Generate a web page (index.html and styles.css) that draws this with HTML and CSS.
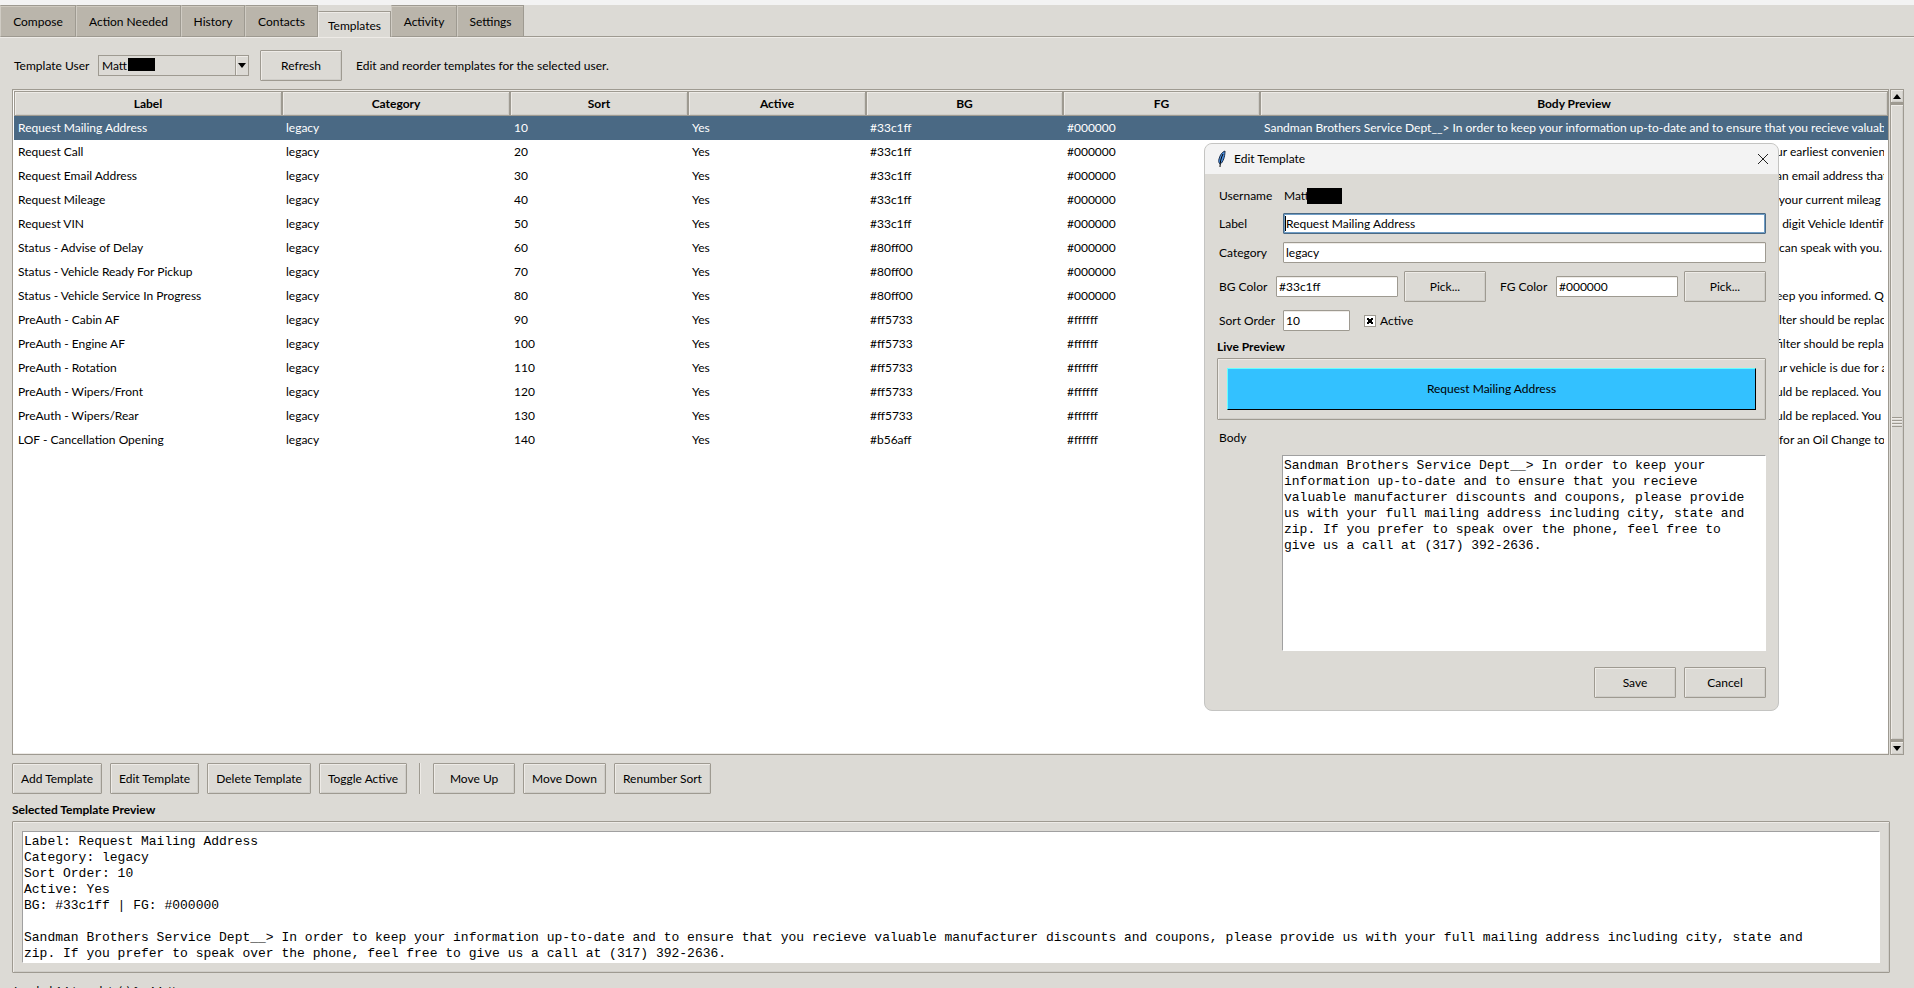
FILE: index.html
```html
<!DOCTYPE html>
<html lang="en">
<head>
<meta charset="utf-8">
<title>Templates</title>
<link rel="stylesheet" href="styles.css">
</head>
<body>
<div class="app">
  <div class="titlebar"></div>
  <nav class="tabs">
    <button class="tab">Compose</button>
    <button class="tab">Action Needed</button>
    <button class="tab">History</button>
    <button class="tab">Contacts</button>
    <button class="tab tab-active">Templates</button>
    <button class="tab">Activity</button>
    <button class="tab">Settings</button>
  </nav>

  <main class="page">
    <div class="toolbar">
      <label for="user">Template User</label>
      <div class="combo">
        <select id="user"><option>Matt</option></select>
        <span class="mask"></span>
        <span class="combo-arrow"><svg width="8" height="5" viewBox="0 0 8 5"><path d="M0 0h8L4 5z"/></svg></span>
      </div>
      <button class="btn btn-refresh">Refresh</button>
      <span>Edit and reorder templates for the selected user.</span>
    </div>

    <div class="list">
      <div class="list-frame">
        <table class="grid">
          <colgroup><col class="c-label"><col class="c-cat"><col class="c-sort"><col class="c-active"><col class="c-bg"><col class="c-fg"><col></colgroup>
          <thead>
            <tr><th>Label</th><th>Category</th><th>Sort</th><th>Active</th><th>BG</th><th>FG</th><th>Body Preview</th></tr>
          </thead>
          <tbody>
            <tr class="selected"><td>Request Mailing Address</td><td>legacy</td><td>10</td><td>Yes</td><td>#33c1ff</td><td>#000000</td><td><div class="body">Sandman Brothers Service Dept__&gt; In order to keep your information up-to-date and to ensure that you recieve valuab</div></td></tr>
            <tr><td>Request Call</td><td>legacy</td><td>20</td><td>Yes</td><td>#33c1ff</td><td>#000000</td><td><div class="body"><span class="lead"></span><span>ur earliest convenien</span></div></td></tr>
            <tr><td>Request Email Address</td><td>legacy</td><td>30</td><td>Yes</td><td>#33c1ff</td><td>#000000</td><td><div class="body"><span class="lead"></span><span>an email address that</span></div></td></tr>
            <tr><td>Request Mileage</td><td>legacy</td><td>40</td><td>Yes</td><td>#33c1ff</td><td>#000000</td><td><div class="body"><span class="lead"></span><span> your current mileag</span></div></td></tr>
            <tr><td>Request VIN</td><td>legacy</td><td>50</td><td>Yes</td><td>#33c1ff</td><td>#000000</td><td><div class="body"><span class="lead"></span><span>  digit Vehicle Identif</span></div></td></tr>
            <tr><td>Status - Advise of Delay</td><td>legacy</td><td>60</td><td>Yes</td><td>#80ff00</td><td>#000000</td><td><div class="body"><span class="lead"></span><span> can speak with you.</span></div></td></tr>
            <tr><td>Status - Vehicle Ready For Pickup</td><td>legacy</td><td>70</td><td>Yes</td><td>#80ff00</td><td>#000000</td><td></td></tr>
            <tr><td>Status - Vehicle Service In Progress</td><td>legacy</td><td>80</td><td>Yes</td><td>#80ff00</td><td>#000000</td><td><div class="body"><span class="lead"></span><span>eep you informed. Q</span></div></td></tr>
            <tr><td>PreAuth - Cabin AF</td><td>legacy</td><td>90</td><td>Yes</td><td>#ff5733</td><td>#ffffff</td><td><div class="body"><span class="lead"></span><span>ilter should be replac</span></div></td></tr>
            <tr><td>PreAuth - Engine AF</td><td>legacy</td><td>100</td><td>Yes</td><td>#ff5733</td><td>#ffffff</td><td><div class="body"><span class="lead"></span><span>filter should be repla</span></div></td></tr>
            <tr><td>PreAuth - Rotation</td><td>legacy</td><td>110</td><td>Yes</td><td>#ff5733</td><td>#ffffff</td><td><div class="body"><span class="lead"></span><span>ur vehicle is due for a</span></div></td></tr>
            <tr><td>PreAuth - Wipers/Front</td><td>legacy</td><td>120</td><td>Yes</td><td>#ff5733</td><td>#ffffff</td><td><div class="body"><span class="lead"></span><span>uld be replaced. You</span></div></td></tr>
            <tr><td>PreAuth - Wipers/Rear</td><td>legacy</td><td>130</td><td>Yes</td><td>#ff5733</td><td>#ffffff</td><td><div class="body"><span class="lead"></span><span>uld be replaced. You</span></div></td></tr>
            <tr><td>LOF - Cancellation Opening</td><td>legacy</td><td>140</td><td>Yes</td><td>#b56aff</td><td>#ffffff</td><td><div class="body"><span class="lead"></span><span> for an Oil Change to</span></div></td></tr>
          </tbody>
        </table>
      </div>
      <div class="scrollbar">
        <button class="scroll-btn" aria-label="Scroll up"><svg width="8" height="5" viewBox="0 0 8 5"><path d="M0 5h8L4 0z"/></svg></button>
        <div class="thumb"><span class="grip"></span></div>
        <button class="scroll-btn" aria-label="Scroll down"><svg width="8" height="5" viewBox="0 0 8 5"><path d="M0 0h8L4 5z"/></svg></button>
      </div>
    </div>

    <div class="actions">
      <button class="btn">Add Template</button>
      <button class="btn">Edit Template</button>
      <button class="btn">Delete Template</button>
      <button class="btn">Toggle Active</button>
      <span class="sep"></span>
      <button class="btn">Move Up</button>
      <button class="btn">Move Down</button>
      <button class="btn">Renumber Sort</button>
    </div>

    <h2 class="heading">Selected Template Preview</h2>
    <div class="frame preview">
      <pre class="mono preview-text">Label: Request Mailing Address
Category: legacy
Sort Order: 10
Active: Yes
BG: #33c1ff | FG: #000000

Sandman Brothers Service Dept__&gt; In order to keep your information up-to-date and to ensure that you recieve valuable manufacturer discounts and coupons, please provide us with your full mailing address including city, state and
zip. If you prefer to speak over the phone, feel free to give us a call at (317) 392-2636.</pre>
    </div>
  </main>
  <footer class="status">Loaded 14 template(s) for Matt.</footer>

  <section class="dialog" role="dialog" aria-label="Edit Template">
    <header class="dialog-title">
      <svg class="feather" width="12" height="18" viewBox="0 0 12 18"><path d="M9 1C6 2 4 5 3 9c-.5 2-.5 3 .5 4.500l1 .5C7 12 9 7 9 1z" fill="#4a8fe0" stroke="#1c2f4c"/><path d="M7 4C5 8 4 12 4 17" fill="none" stroke="#000"/></svg>
      <span class="dialog-name">Edit Template</span>
      <button class="close" aria-label="Close"><svg width="12" height="12" viewBox="0 0 12 12"><path d="M1 1l10 10M11 1L1 11" stroke="#222" fill="none"/></svg></button>
    </header>
    <form class="form">
      <div class="field field-user"><span class="name">Username</span><span class="user">Matt<span class="mask"></span></span></div>
      <div class="field"><label class="name" for="f-label">Label</label><input class="entry entry-focus" id="f-label" value="Request Mailing Address"><span class="caret"></span></div>
      <div class="field"><label class="name" for="f-cat">Category</label><input class="entry" id="f-cat" value="legacy"></div>
      <div class="colors">
        <label for="f-bg">BG Color</label><input class="entry" id="f-bg" value="#33c1ff"><button type="button" class="btn">Pick...</button>
        <label class="fg-label" for="f-fg">FG Color</label><input class="entry" id="f-fg" value="#000000"><button type="button" class="btn">Pick...</button>
      </div>
      <div class="field field-sort"><label class="name" for="f-sort">Sort Order</label><input class="entry entry-short" id="f-sort" value="10"><label class="check"><input type="checkbox" checked><span>Active</span></label></div>
      <h2 class="heading">Live Preview</h2>
      <div class="frame live"><button type="button" class="live-btn">Request Mailing Address</button></div>
      <label class="body-label" for="f-body">Body</label>
      <textarea class="mono body-text" id="f-body" spellcheck="false">Sandman Brothers Service Dept__&gt; In order to keep your
information up-to-date and to ensure that you recieve
valuable manufacturer discounts and coupons, please provide
us with your full mailing address including city, state and
zip. If you prefer to speak over the phone, feel free to
give us a call at (317) 392-2636.</textarea>
      <div class="dialog-actions"><button type="button" class="btn">Save</button><button type="button" class="btn">Cancel</button></div>
    </form>
  </section>
</div>
</body>
</html>
```
FILE: styles.css
```css
:root {
  --bg: #dcdad5;
  --dark: #9e9a91;
  --light: #eeebe7;
  --shade: #cfcdc8;
}
* { box-sizing: border-box; }
body {
  margin: 0;
  background: var(--bg);
  color: #000;
  font: 12px/16px Lato, "Open Sans", sans-serif;
}
button, input, select, textarea { font: inherit; color: inherit; border-radius: 0; margin: 0; }
.app { position: relative; height: 100vh; overflow: hidden; display: flex; flex-direction: column; }
.titlebar { flex: none; height: 5px; background: #f3f3f3; }

.tabs {
  flex: none;
  display: grid;
  grid-template-columns: 76px 105px 64px 73px 73px 66px 67px;
  align-items: end;
  height: 33px;
  border-bottom: 1px solid var(--light);
  box-shadow: inset 0 -1px var(--dark);
}
.tab {
  height: 32px;
  padding: 2px 0 0;
  border: 1px solid var(--dark);
  border-left-color: #d0ccc4;
  background: #bab5ab;
  box-shadow: inset 0 1px #cfcac0;
}
.tab-active {
  height: 26px;
  padding: 2px 0 0;
  border-left-color: var(--light);
  border-bottom: 0;
  background: var(--bg);
  box-shadow: inset 0 1px var(--light);
}

.page { flex: 1; min-height: 0; display: flex; flex-direction: column; padding: 12px 9px 0 12px; }
.toolbar { display: flex; align-items: center; padding-left: 2px; height: 31px; }
.toolbar > label { width: 84px; }
.btn {
  min-width: 82px;
  height: 31px;
  padding: 0 8px;
  border: 1px solid var(--dark);
  border-radius: 1px;
  background: var(--bg);
  box-shadow: inset 1px 1px var(--light), inset -1px -1px var(--shade);
  white-space: nowrap;
}
.btn-refresh { margin: 0 14px 0 11px; }
.combo { position: relative; width: 151px; height: 21px; }
.combo select {
  appearance: none;
  width: 100%;
  height: 100%;
  padding: 0 3px;
  border: 1px solid var(--dark);
  background: var(--bg);
}
.mask { position: absolute; left: 30px; top: 3px; width: 27px; height: 13px; background: #000; }
.combo-arrow {
  position: absolute;
  right: 1px;
  top: 1px;
  width: 13px;
  height: 19px;
  display: grid;
  place-items: center;
  border-left: 1px solid var(--dark);
  box-shadow: inset 1px 1px var(--light);
  pointer-events: none;
}

.list { flex: 1; min-height: 0; display: flex; gap: 1px; margin-top: 8px; padding-right: 1px; }
.list-frame { flex: 1; min-width: 0; padding: 1px 0 0 1px; border: 1px solid var(--dark); background: #fff; box-shadow: inset 0 -1px var(--light), inset 0 1px var(--light); }
.grid { width: 100%; table-layout: fixed; border-collapse: separate; border-spacing: 0; }
.c-label { width: 268px; }
.c-cat { width: 228px; }
.c-sort, .c-active { width: 178px; }
.c-bg, .c-fg { width: 197px; }
.grid th {
  height: 25px;
  padding: 0;
  border: 1px solid var(--dark);
  background: var(--bg);
  box-shadow: inset 1px 1px var(--light), inset -1px -1px var(--shade);
  font-weight: 700;
}
.grid td { height: 24px; padding: 0 4px; white-space: nowrap; overflow: hidden; }
.selected td { background: #4a6984; color: #fff; }
.body { display: flex; overflow: hidden; white-space: pre; }
.lead { flex: 0 0 512px; }

.scrollbar { flex: none; width: 14px; display: flex; flex-direction: column; gap: 1px; background: var(--dark); }
.scroll-btn, .thumb {
  display: grid;
  place-items: center;
  border: 1px solid var(--dark);
  background: var(--bg);
  box-shadow: inset 1px 1px var(--light), inset -1px -1px var(--shade);
}
.scroll-btn { height: 14px; padding: 0; }
.thumb { flex: 1; }
.grip { width: 10px; height: 10px; background: repeating-linear-gradient(var(--dark) 0 1px, var(--light) 1px 2px, var(--bg) 2px 3px); }

.actions { display: flex; gap: 8px; margin-top: 8px; }
.sep { width: 2px; margin: 0 4px; border-left: 1px solid var(--dark); border-right: 1px solid var(--light); }
.heading { margin: 0; font-size: 12px; line-height: 16px; font-weight: 700; }
.page > .heading { margin: 8px 0 3px; }
.frame { border: 1px solid var(--dark); border-radius: 1px; box-shadow: inset 1px 1px var(--light), inset -1px -1px var(--shade); }
.preview { margin-right: 15px; padding: 9px; }
.mono { font-family: "Liberation Mono", monospace; font-size: 13px; line-height: 16px; }
.preview-text { margin: 0; height: 132px; padding: 2px 1px; border: 1px solid #fff; border-top-color: #a0a0a0; border-left-color: #a0a0a0; background: #fff; overflow: hidden; }
.status { flex: none; height: 15px; padding: 10px 14px 0; overflow: hidden; }

.dialog {
  position: absolute;
  left: 1204px;
  top: 143px;
  width: 575px;
  border: 1px solid #c4c4c2;
  border-radius: 8px;
  background: var(--bg);
  overflow: hidden;
}
.dialog-title { display: flex; align-items: center; height: 30px; padding: 0 9px 0 11px; background: #f3f3f3; }
.dialog-name { flex: 1; margin-left: 6px; }
.close { display: grid; place-items: center; padding: 0; width: 12px; height: 12px; border: 0; background: none; }
.form { display: flex; flex-direction: column; padding: 14px 12px 12px; }
.field { position: relative; display: flex; align-items: center; height: 21px; margin-bottom: 8px; padding-left: 2px; }
.field-user { height: 16px; margin-bottom: 9px; }
.name { flex: none; width: 64px; }
.user { position: relative; padding-left: 1px; }
.user .mask { left: 24px; top: 0; width: 35px; height: 16px; }
.entry {
  min-width: 0;
  flex: 1;
  height: 21px;
  padding: 0 2px;
  border: 1px solid var(--dark);
  border-radius: 1px;
  background: #fff;
  box-shadow: inset 0 1px var(--light);
}
.entry-focus { border-color: #4a6984; box-shadow: inset 0 0 0 1px #6f9dc6; outline: 0; }
.caret { position: absolute; left: 68px; top: 3px; width: 1px; height: 15px; background: #000; }
.colors { display: grid; grid-template-columns: 57px 1fr 88px 70px 1fr 88px; align-items: center; padding-left: 2px; }
.colors .btn { margin-left: 6px; }
.fg-label { padding-left: 14px; }
.field-sort { margin: 8px 0; }
.entry-short { flex: 0 0 67px; }
.check { display: flex; align-items: center; gap: 4px; margin-left: 14px; }
.check input {
  appearance: none;
  width: 12px;
  height: 12px;
  border: 1px solid var(--dark);
  background: linear-gradient(45deg, transparent 40%, #000 40% 60%, transparent 60%) 2px 2px / 6px 6px no-repeat,
    linear-gradient(-45deg, transparent 40%, #000 40% 60%, transparent 60%) 2px 2px / 6px 6px no-repeat, #fff;
}
.live { margin-top: 3px; padding: 9px; }
.live-btn { display: block; width: 100%; height: 42px; border: 1px solid #000; border-top-color: #66ffff; border-left-color: #66ffff; background: #33c1ff; }
.body-label { margin: 10px 0 9px 2px; }
.body-text { height: 196px; margin-left: 65px; padding: 2px 1px; border: 1px solid #fff; border-top-color: #a0a0a0; border-left-color: #a0a0a0; background: #fff; resize: none; outline: 0; white-space: pre; overflow: hidden; }
.dialog-actions { display: flex; justify-content: flex-end; gap: 8px; margin-top: 16px; }
```
